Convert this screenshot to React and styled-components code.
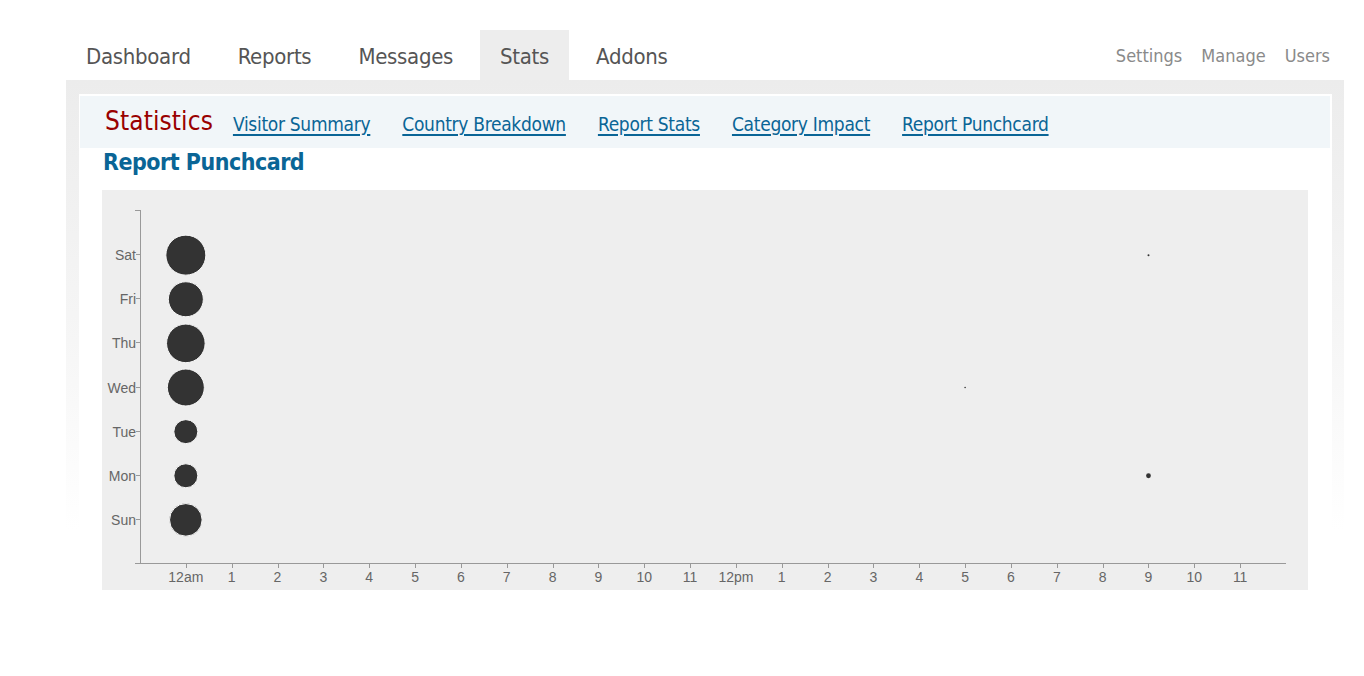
import React from "react";
import styled, { createGlobalStyle } from "styled-components";

const GlobalStyle = createGlobalStyle`
  body {
    margin: 0;
    background: #fff;
    font-family: "DejaVu Sans Condensed", "Liberation Sans", sans-serif;
  }
`;

const Page = styled.div`
  width: 1364px;
  height: 676px;
  padding-top: 30px;
  box-sizing: border-box;
`;

const TopBar = styled.div`
  margin-left: 66px;
  width: 1278px;
  display: flex;
  align-items: flex-end;
  justify-content: space-between;
  height: 50px;
`;

const Tabs = styled.div`
  display: flex;
  gap: 7px;
  height: 100%;
`;

const Tab = styled.a`
  display: flex;
  align-items: center;
  padding: 2px 20px 0;
  font-size: 22px;
  letter-spacing: -0.3px;
  color: #555;
  text-decoration: none;
  background: ${(p) => (p.$active ? "#ededed" : "transparent")};
`;

const SideLinks = styled.div`
  display: flex;
  gap: 19px;
  padding-right: 14px;
  height: 100%;
  align-items: center;
  padding-top: 2px;
`;

const SideLink = styled.a`
  font-size: 18px;
  color: #8a8a8a;
  text-decoration: none;
`;

const Frame = styled.div`
  margin-left: 66px;
  width: 1278px;
  box-sizing: border-box;
  padding: 14px 12px 40px 13px;
  background: linear-gradient(to bottom, #ececec 0, #f6f6f6 260px, #fff 450px);
`;

const Panel = styled.div`
  background: #fff;
  padding: 2px 2px 0 1px;
`;

const SubNav = styled.div`
  display: flex;
  align-items: center;
  gap: 32px;
  height: 52px;
  padding: 0 0 0 25px;
  background: #f1f6f9;
`;

const SectionTitle = styled.span`
  font-size: 26px;
  letter-spacing: 0.1px;
  color: #990000;
  margin-right: -12px;
  padding-bottom: 2px;
`;

const SubLink = styled.a`
  font-size: 19px;
  letter-spacing: -0.3px;
  color: #0a6596;
  text-decoration: underline;
  text-underline-offset: 3px;
  text-decoration-thickness: 2px;
  padding-top: 4px;
`;

const Content = styled.div`
  padding: 0 22px 0 22px;
`;

const Heading = styled.h2`
  margin: 0;
  height: 42px;
  display: flex;
  align-items: center;
  padding: 0 0 14px 1px;
  box-sizing: border-box;
  font-size: 23px;
  letter-spacing: -0.5px;
  font-weight: bold;
  color: #0a6596;
`;

const ChartBox = styled.div`
  background: #eeeeee;
  height: 400px;
`;

const days = ["Sat", "Fri", "Thu", "Wed", "Tue", "Mon", "Sun"];
const hours = [
  "12am", "1", "2", "3", "4", "5", "6", "7", "8", "9", "10", "11",
  "12pm", "1", "2", "3", "4", "5", "6", "7", "8", "9", "10", "11",
];

// [day index, hour, radius]
const points = [
  [0, 0, 20],
  [1, 0, 17.5],
  [2, 0, 19.3],
  [3, 0, 18.5],
  [4, 0, 12],
  [5, 0, 12],
  [6, 0, 16.3],
  [0, 21, 1],
  [3, 17, 0.8],
  [5, 21, 2.4],
];

const AXIS_X = 38;
const AXIS_TOP = 20;
const AXIS_BOTTOM = 373;
const AXIS_RIGHT = 1184;
const rowStep = (AXIS_BOTTOM - AXIS_TOP) / 8;
const colStep = (AXIS_RIGHT - AXIS_X) / 25;
const yOf = (i) => AXIS_TOP + rowStep * (i + 1);
const xOf = (h) => AXIS_X + colStep * (h + 1);

const Punchcard = () => (
  <svg width="1206" height="400" style={{ display: "block" }}>
    <g stroke="#999" strokeWidth="1" fill="none">
      <line x1={AXIS_X + 0.5} y1={AXIS_TOP} x2={AXIS_X + 0.5} y2={AXIS_BOTTOM} />
      <line x1={AXIS_X - 5} y1={AXIS_TOP + 0.5} x2={AXIS_X} y2={AXIS_TOP + 0.5} />
      <line x1={AXIS_X - 5} y1={AXIS_BOTTOM + 0.5} x2={AXIS_RIGHT} y2={AXIS_BOTTOM + 0.5} />
      {days.map((d, i) => (
        <line key={d} x1={AXIS_X - 4} y1={Math.round(yOf(i)) + 0.5} x2={AXIS_X} y2={Math.round(yOf(i)) + 0.5} />
      ))}
      {hours.map((h, i) => (
        <line key={i} x1={Math.round(xOf(i)) + 0.5} y1={AXIS_BOTTOM} x2={Math.round(xOf(i)) + 0.5} y2={AXIS_BOTTOM + 5} />
      ))}
    </g>
    <g fontFamily="'Liberation Sans', Arial, sans-serif" fontSize="14" fill="#666">
      {days.map((d, i) => (
        <text key={d} x={AXIS_X - 4} y={yOf(i) + 6} textAnchor="end">
          {d}
        </text>
      ))}
      {hours.map((h, i) => (
        <text key={i} x={xOf(i)} y={AXIS_BOTTOM + 19} textAnchor="middle">
          {h}
        </text>
      ))}
    </g>
    <g fill="#333" stroke="#f8f8f8" strokeWidth="1">
      {points.map(([d, h, r], i) => (
        <circle key={i} cx={xOf(h)} cy={yOf(d) + 1} r={r} strokeWidth={r > 3 ? 1 : 0} />
      ))}
    </g>
  </svg>
);

export default function App() {
  return (
    <Page>
      <GlobalStyle />
      <TopBar>
        <Tabs>
          <Tab>Dashboard</Tab>
          <Tab>Reports</Tab>
          <Tab>Messages</Tab>
          <Tab $active>Stats</Tab>
          <Tab>Addons</Tab>
        </Tabs>
        <SideLinks>
          <SideLink>Settings</SideLink>
          <SideLink>Manage</SideLink>
          <SideLink>Users</SideLink>
        </SideLinks>
      </TopBar>
      <Frame>
        <Panel>
          <SubNav>
            <SectionTitle>Statistics</SectionTitle>
            <SubLink href="#">Visitor Summary</SubLink>
            <SubLink href="#">Country Breakdown</SubLink>
            <SubLink href="#">Report Stats</SubLink>
            <SubLink href="#">Category Impact</SubLink>
            <SubLink href="#">Report Punchcard</SubLink>
          </SubNav>
          <Content>
            <Heading>Report Punchcard</Heading>
            <ChartBox>
              <Punchcard />
            </ChartBox>
          </Content>
        </Panel>
      </Frame>
    </Page>
  );
}
